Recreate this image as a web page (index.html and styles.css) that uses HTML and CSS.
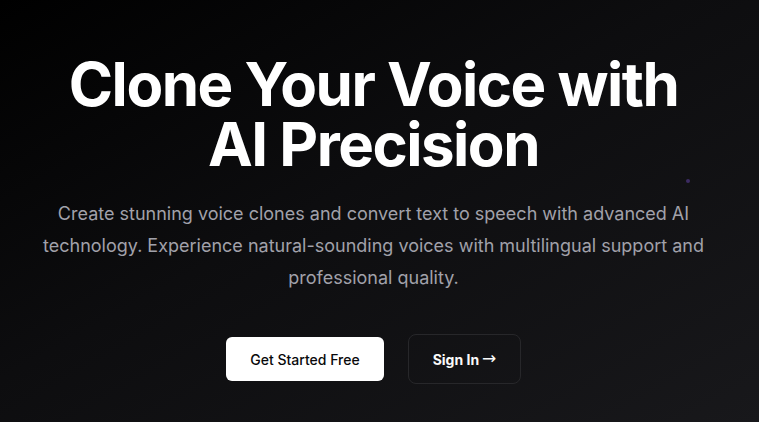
FILE: index.html
```html
<!DOCTYPE html>
<html lang="en">
<head>
<meta charset="utf-8">
<title>Clone Your Voice with AI Precision</title>
<link rel="stylesheet" href="styles.css">
</head>
<body>
<main class="hero">
  <span class="spark" aria-hidden="true"></span>
  <div class="hero-inner">
    <h1 class="title">Clone Your Voice with<br>AI Precision</h1>
    <p class="lead">Create stunning voice clones and convert text to speech with advanced AI technology. Experience natural-sounding voices with multilingual support and professional quality.</p>
    <div class="actions">
      <a class="btn btn-primary" href="#">Get Started Free</a>
      <a class="btn btn-outline" href="#">Sign In <span class="arrow">→</span></a>
    </div>
  </div>
</main>
</body>
</html>
```

FILE: styles.css
```css
* { box-sizing: border-box; }
html, body { margin: 0; padding: 0; }
body {
  font-family: Inter, "Noto Sans", sans-serif;
  background: #000;
  color: #fff;
}
.hero {
  position: relative;
  width: 100%;
  height: 422px;
  overflow: hidden;
  background: linear-gradient(to bottom right, #000000 0%, #0d0d0f 45%, #18181b 100%);
  padding: 54px 12px 0 0;
}
.hero-inner {
  display: flex;
  flex-direction: column;
  align-items: center;
  text-align: center;
}
.title {
  margin: 0;
  font-size: 60px;
  line-height: 60px;
  font-weight: 700;
  letter-spacing: -0.025em;
}
.lead {
  margin: 24px 0 0;
  max-width: 680px;
  font-size: 18px;
  line-height: 32px;
  color: #a1a1aa;
}
.actions {
  margin-top: 40px;
  display: flex;
  align-items: center;
  gap: 24px;
}
.btn {
  display: inline-flex;
  align-items: center;
  justify-content: center;
  text-decoration: none;
  font-size: 14px;
  border-radius: 6px;
}
.btn-primary {
  width: 158px;
  height: 44px;
  background: #fff;
  color: #09090b;
  font-weight: 500;
}
.btn-outline {
  width: 113px;
  height: 50px;
  border: 1px solid #27272a;
  border-radius: 8px;
  color: #fafafa;
  font-weight: 700;
  gap: 3px;
}
.arrow {
  font-family: "DejaVu Sans", sans-serif;
  font-size: 17px;
  font-weight: 400;
  line-height: 1;
  position: relative;
  top: -1px;
}
.spark {
  position: absolute;
  left: 686px;
  top: 179px;
  width: 4px;
  height: 4px;
  border-radius: 50%;
  background: rgba(139, 92, 246, 0.35);
}
```
